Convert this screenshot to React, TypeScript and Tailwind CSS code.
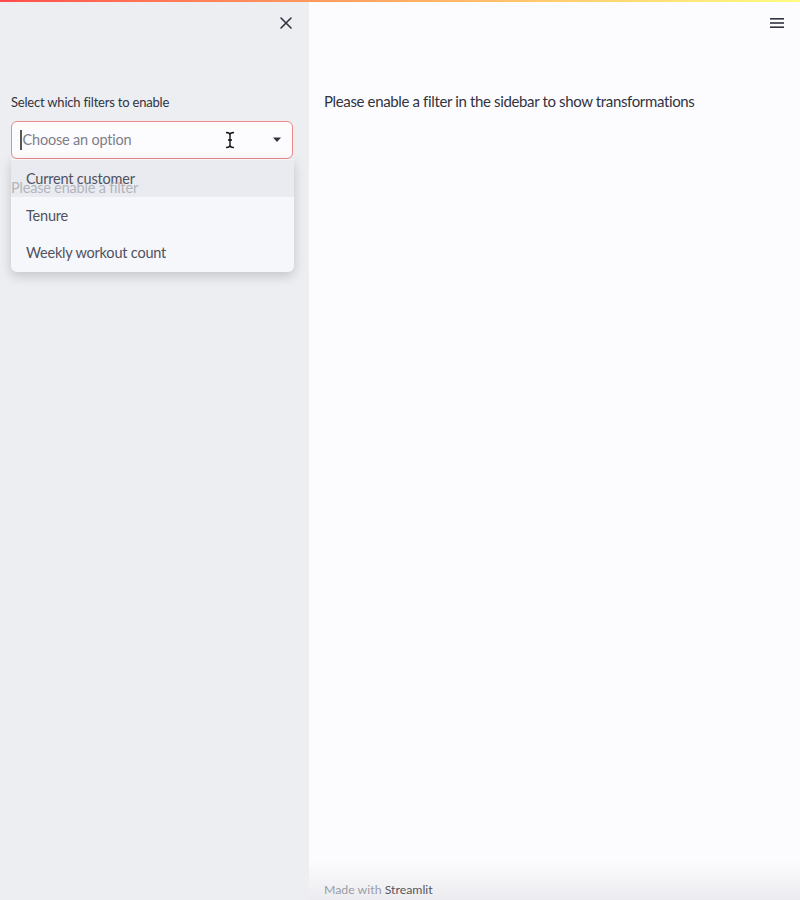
import React from 'react';

const font = { fontFamily: '"Source Sans Pro", Lato, "Noto Sans", sans-serif' };

function CloseIcon() {
  return (
    <svg width="14" height="14" viewBox="0 0 14 14" fill="none" stroke="#31333f" strokeWidth="1.6" strokeLinecap="round">
      <path d="M2 2 L12 12 M12 2 L2 12" />
    </svg>
  );
}

function MenuIcon() {
  return (
    <svg width="16" height="12" viewBox="0 0 16 12" fill="#31333f">
      <rect x="1" y="1" width="14" height="1.6" />
      <rect x="1" y="5.2" width="14" height="1.6" />
      <rect x="1" y="9.4" width="14" height="1.6" />
    </svg>
  );
}

function Caret() {
  return (
    <svg width="10" height="6" viewBox="0 0 10 6" fill="#31333f">
      <path d="M1 0.5 L9 0.5 L5 5 Z" />
    </svg>
  );
}

function IBeam() {
  return (
    <svg width="10" height="18" viewBox="0 0 10 18" fill="none" stroke="#111" strokeWidth="1.4">
      <path d="M1 1.5 Q5 1.5 5 4 L5 14 Q5 16.5 1 16.5 M9 1.5 Q5 1.5 5 4 M9 16.5 Q5 16.5 5 14 M3 9 L7 9" />
    </svg>
  );
}

const options = ['Current customer', 'Tenure', 'Weekly workout count'];

export default function App() {
  return (
    <div className="relative flex h-[900px] w-[800px] overflow-hidden bg-[#fcfcfe] text-[#31333f]" style={font}>
      {/* top decoration bar */}
      <div className="absolute left-0 right-0 top-0 z-30 h-[2px] bg-gradient-to-r from-[#ff4b4b] to-[#fffd80]" />

      {/* Sidebar */}
      <aside className="flex w-[309px] shrink-0 flex-col bg-[#eceef2] pl-[11px] pr-[16px]">
        <div className="flex h-[30px] items-end justify-end pr-[0px]">
          <CloseIcon />
        </div>
        <label className="mt-[63px] text-[13px] leading-[18px] tracking-[-0.2px]">Select which filters to enable</label>
        <div className="relative mt-[10px]">
          <div className="flex h-[38px] items-center rounded-[6px] border border-[#f08a8a] bg-[#fcfcfe] pl-[8px] pr-[10px]">
            <span className="mr-[1px] h-[20px] w-[1.5px] bg-[#555]" />
            <span className="flex-1 text-[14.5px] tracking-[-0.2px] text-[#7c7f8a]">Choose an option</span>
            <span className="mr-[37px]">
              <IBeam />
            </span>
            <Caret />
          </div>
          {/* dropdown */}
          <ul className="absolute left-0 right-[-1px] top-[38px] z-20 rounded-b-[6px] bg-[#f6f7fa] py-[1px] shadow-[0_4px_12px_rgba(0,0,0,0.18)]">
            {options.map((o, i) => (
              <li
                key={o}
                className={`flex h-[37px] items-center px-[15px] text-[14.5px] tracking-[-0.2px] text-[#4f5260] ${i === 0 ? 'bg-[#e9ebf0]' : ''}`}
              >
                {o}
              </li>
            ))}
          </ul>
        </div>
        <p className="relative z-30 mt-[18px] text-[14.5px] tracking-[-0.2px] text-[#a3a6ae]/80">Please enable a filter</p>
      </aside>

      {/* Main */}
      <main className="relative flex flex-1 flex-col">
        <div className="flex h-[29px] items-end justify-end pr-[15px]">
          <MenuIcon />
        </div>
        <p className="ml-[15px] mt-[61px] text-[15px] leading-[22px] tracking-[-0.36px]">
          Please enable a filter in the sidebar to show transformations
        </p>
        <div className="flex-1" />
        <footer className="flex h-[40px] items-end bg-gradient-to-b from-[#fcfcfe] to-[#ececf0] pb-[1px] pl-[15px] text-[12.3px]">
          <span className="text-[#9a9ca6]">Made with&nbsp;</span>
          <span className="text-[#55575f]">Streamlit</span>
        </footer>
      </main>
    </div>
  );
}
